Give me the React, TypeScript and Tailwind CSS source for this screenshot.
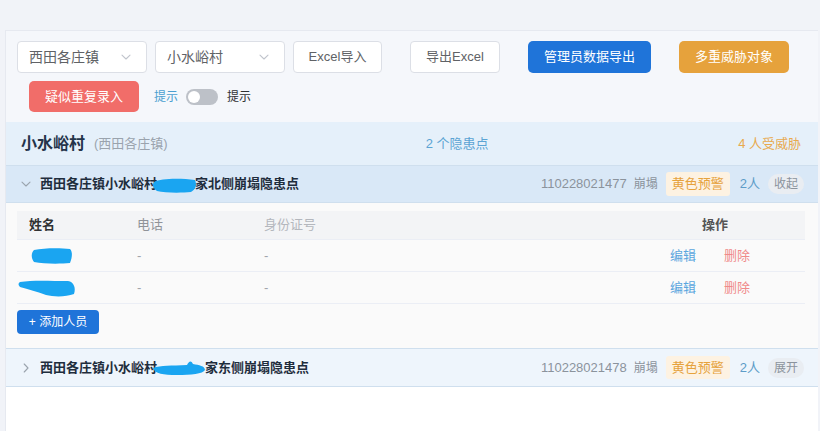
import React from "react";

const FONT = '"Liberation Sans", "Noto Sans CJK SC", sans-serif';

function Chevron({ dir = "down", className = "" }: { dir?: "down" | "right"; className?: string }) {
  return (
    <svg viewBox="0 0 12 12" className={className} fill="none" stroke="currentColor" strokeWidth="1.1" strokeLinecap="round" strokeLinejoin="round">
      {dir === "down" ? <path d="M2 4.2 6 8l4-3.8" /> : <path d="M4.2 2 8 6l-3.8 4" />}
    </svg>
  );
}

// scribbled-out marker over private text
function Scribble({ w, h = 16, d }: { w: number; h?: number; d: string }) {
  return (
    <svg width={w} height={h} viewBox={`0 0 ${w} ${h}`} className="inline-block align-middle">
      <path d={d} fill="#1aa5f1" />
    </svg>
  );
}

function Select({ label }: { label: string }) {
  return (
    <div className="flex h-[32px] w-[130px] items-center justify-between rounded-[4px] border border-[#dcdfe6] bg-white pl-[11px] pr-[14px] text-[14px] text-[#606266]">
      <span>{label}</span>
      <Chevron className="h-[12px] w-[12px] text-[#c0c4cc]" />
    </div>
  );
}

function HazardRow({ open, code, tail }: { open: boolean; code: string; tail: string }) {
  return (
    <div
      className={`flex items-center border-y border-[#cfdfee] pl-[14px] pr-[14px] ${
        open ? "h-[38px] bg-[#d9e8f7]" : "h-[39px] bg-[#eef5fc]"
      }`}
    >
      <Chevron dir={open ? "down" : "right"} className="h-[12px] w-[12px] text-[#9aa3ad]" />
      <div className="ml-[8px] flex items-center text-[13px] font-bold text-[#1f2d3d]">
        <span>西田各庄镇小水峪村</span>
        <span className="-ml-[6px] -mr-[2px]">
          {open ? (
            <Scribble w={46} d="M3 5 C10 1 30 1 44 3 C46 8 45 12 40 15 C30 16 14 16 6 14 C2 11 1 8 3 5 Z" />
          ) : (
            <Scribble w={56} d="M2 8 C10 5 20 6 36 5 C38 1 40 0 42 4 C48 5 54 6 54 10 C52 14 40 15 26 15 C12 15 4 14 2 8 Z" />
          )}
        </span>
        <span>{tail}</span>
      </div>
      <div className="ml-auto flex items-center text-[13px]">
        <span className="text-[#8b939c]">{code}</span>
        <span className="ml-[7px] text-[12px] text-[#8b939c]">崩塌</span>
        <span className="ml-[8px] rounded-[3px] bg-[#fdf2e2] px-[6px] py-[2px] text-[#e6a23c]">黄色预警</span>
        <span className="ml-[10px] text-[#5d9cc8]">2人</span>
        <span className="ml-[8px] rounded-full bg-[#e9edf2] px-[6px] py-[1px] text-[12px] text-[#8b939c]">{open ? "收起" : "展开"}</span>
      </div>
    </div>
  );
}

function PersonRow({ blob }: { blob: React.ReactNode }) {
  return (
    <div className="flex h-[32px] items-center border-b border-[#ebeef5] text-[13px]">
      <div className="w-[120px]">{blob}</div>
      <div className="w-[127px] text-[#a0a4ab]">-</div>
      <div className="flex-1 text-[#a0a4ab]">-</div>
      <div className="flex w-[135px] items-center">
        <span className="text-[#5ba6de]">编辑</span>
        <span className="ml-[28px] text-[#f08a8a]">删除</span>
      </div>
    </div>
  );
}

export default function App() {
  return (
    <div className="min-h-[431px] w-[820px] bg-[#f1f3f8]" style={{ fontFamily: FONT }}>
      <div className="h-[30px]" />
      <div className="ml-[5px] mr-[2px] min-h-[401px] border-l border-t border-[#e6e9f0] bg-white">
        {/* toolbar */}
        <div className="bg-[#f5f7fb] px-[11px] pb-[10px] pt-[10px]">
          <div className="flex items-center text-[13px]">
            <Select label="西田各庄镇" />
            <div className="ml-[8px]">
              <Select label="小水峪村" />
            </div>
            <button className="ml-[8px] h-[32px] w-[89px] rounded-[4px] border border-[#dcdfe6] bg-white text-[#606266]">Excel导入</button>
            <button className="ml-[28px] h-[32px] w-[90px] rounded-[4px] border border-[#dcdfe6] bg-white text-[#606266]">导出Excel</button>
            <button className="ml-[28px] h-[32px] w-[123px] rounded-[5px] bg-[#1f74d9] text-white">管理员数据导出</button>
            <button className="ml-[28px] h-[32px] w-[110px] rounded-[5px] bg-[#e6a23c] text-white">多重威胁对象</button>
          </div>
          <div className="mt-[8px] flex items-center pl-[12px] text-[13px]">
            <button className="h-[31px] w-[110px] rounded-[5px] bg-[#f16d69] text-white">疑似重复录入</button>
            <span className="ml-[15px] text-[12px] text-[#4a9fd0]">提示</span>
            <span className="ml-[8px] flex h-[16px] w-[32px] items-center rounded-full bg-[#bdc1c8] p-[2px]">
              <span className="h-[12px] w-[12px] rounded-full bg-white" />
            </span>
            <span className="ml-[9px] text-[12px] text-[#303133]">提示</span>
          </div>
        </div>

        {/* village header */}
        <div className="flex h-[43px] items-center bg-[#e5f0fa] pl-[15px] pr-[17px]">
          <span className="text-[16px] font-bold text-[#24344a]">小水峪村</span>
          <span className="ml-[9px] text-[13px] text-[#9aa3ad]">(西田各庄镇)</span>
          <span className="ml-[258px] text-[13px] text-[#5ba4d4]">2 个隐患点</span>
          <span className="ml-auto text-[13px] text-[#e8a94e]">4 人受威胁</span>
        </div>

        <HazardRow open code="110228021477" tail="家北侧崩塌隐患点" />

        {/* people table */}
        <div className="bg-[#fafafa] px-[11px] pb-[14px] pt-[8px]">
          <div className="mr-[2px]">
            <div className="flex h-[29px] items-center border-b border-[#ebeef5] bg-[#f3f4f6] pl-[12px] text-[13px]">
              <div className="w-[108px] font-bold text-[#303133]">姓名</div>
              <div className="w-[127px] text-[#909399]">电话</div>
              <div className="flex-1 text-[#b4b7bd]">身份证号</div>
              <div className="w-[103px] font-bold text-[#555]">操作</div>
            </div>
            <PersonRow
              blob={
                <span className="ml-[13px]">
                  <Scribble w={44} h={18} d="M4 3 C14 1 30 1 40 2 C43 5 42 11 40 16 C30 17 14 17 4 15 C1 11 1 6 4 3 Z" />
                </span>
              }
            />
            <PersonRow
              blob={
                <span className="ml-[1px]">
                  <Scribble w={60} h={20} d="M2 4 C14 2 32 3 50 3 C56 4 58 10 56 16 C48 19 36 19 28 17 C20 14 10 11 2 9 C0 7 0 5 2 4 Z" />
                </span>
              }
            />
          </div>
          <button className="mt-[6px] flex h-[24px] w-[82px] items-center justify-center rounded-[4px] bg-[#1f74d9] text-[12px] text-white">
            + 添加人员
          </button>
        </div>

        <HazardRow open={false} code="110228021478" tail="家东侧崩塌隐患点" />
        <div className="h-[44px] bg-white" />
      </div>
    </div>
  );
}
